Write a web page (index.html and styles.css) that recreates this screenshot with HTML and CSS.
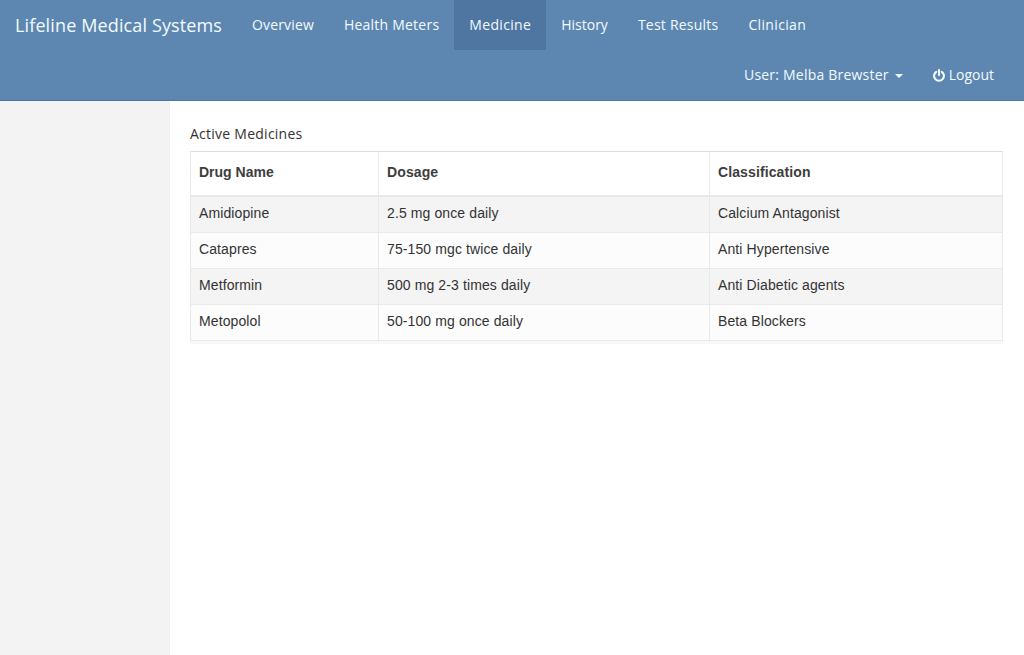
FILE: index.html
```html
<!DOCTYPE html>
<html lang="en">
<head>
<meta charset="utf-8">
<title>Lifeline Medical Systems</title>
<link rel="stylesheet" href="styles.css">
</head>
<body>
<header class="navbar">
  <div class="nav-row">
    <a class="brand">Lifeline Medical Systems</a>
    <nav class="nav">
      <a class="nav-link snug">Overview</a>
      <a class="nav-link">Health Meters</a>
      <a class="nav-link wide active">Medicine</a>
      <a class="nav-link tight">History</a>
      <a class="nav-link">Test Results</a>
      <a class="nav-link wide">Clinician</a>
    </nav>
  </div>
  <div class="nav-row user-row">
    <a class="nav-link user">User: Melba Brewster <span class="caret"></span></a>
    <a class="nav-link tight"><svg class="power" viewBox="0 0 12 13"><path d="M3.2 2.8A4.9 4.9 0 1 0 8.8 2.8M6 1.1v5" fill="none" stroke="#f2fbff" stroke-width="2.1" stroke-linecap="round"/></svg>Logout</a>
  </div>
</header>
<div class="page">
  <aside class="sidebar"></aside>
  <main class="content">
    <h1 class="title">Active Medicines</h1>
    <table class="medicines">
      <thead><tr><th class="col-name">Drug Name</th><th class="col-dosage">Dosage</th><th>Classification</th></tr></thead>
      <tbody>
        <tr><td>Amidiopine</td><td>2.5 mg once daily</td><td>Calcium Antagonist</td></tr>
        <tr><td>Catapres</td><td>75-150 mgc twice daily</td><td>Anti Hypertensive</td></tr>
        <tr><td>Metformin</td><td>500 mg 2-3 times daily</td><td>Anti Diabetic agents</td></tr>
        <tr><td>Metopolol</td><td>50-100 mg once daily</td><td>Beta Blockers</td></tr>
      </tbody>
    </table>
  </main>
</div>
</body>
</html>
```
FILE: styles.css
```css
* { box-sizing: border-box; }
body {
  margin: 0;
  height: 655px;
  display: flex;
  flex-direction: column;
  background: #fff;
  color: #333;
  font: 14px/20px "Open Sans", sans-serif;
}
.navbar { height: 101px; background: #5d87b0; border-bottom: 1px solid #4f76a0; color: #f2fbff; }
.nav-row { display: flex; height: 50px; }
.nav { display: flex; }
.brand { padding: 15px; font-size: 18px; letter-spacing: 0.13px; white-space: nowrap; }
.nav-link { padding: 15px; letter-spacing: 0.23px; white-space: nowrap; display: flex; align-items: center; }
.snug { letter-spacing: 0.14px; }
.wide { letter-spacing: 0.33px; }
.tight { letter-spacing: 0; }
.user { letter-spacing: 0.21px; }
.active { background: #4f76a0; }
.user-row { justify-content: flex-end; padding-right: 15px; }
.caret { margin: 2px 0 0 6px; border-top: 4px solid #f2fbff; border-left: 4px solid transparent; border-right: 4px solid transparent; }
.power { width: 12px; height: 13px; margin-right: 4px; }
.page { flex: 1; display: flex; }
.sidebar { width: 170px; background: #f3f3f3; border-right: 1px solid #eee; }
.content { flex: 1; padding: 23px 21px 0 20px; }
.title { margin: 0 0 7px; font-size: 14px; line-height: 20px; font-weight: 400; letter-spacing: 0.25px; }
.medicines {
  width: 813px;
  table-layout: fixed;
  border-collapse: separate;
  border-spacing: 0;
  border: 1px solid #e9e9e9;
  border-top-color: #ddd;
  font-family: "Liberation Sans", Arial, sans-serif;
  letter-spacing: 0.11px;
  box-shadow: 0 3px 0 #f8f8f8;
}
.medicines th { height: 45px; padding: 0 8px 3px; text-align: left; color: #3d3d3d; border-bottom: 2px solid #e9e9e9; }
.medicines td { height: 36px; padding: 0 8px 3px; border-bottom: 1px solid #e9e9e9; }
.medicines th + th, .medicines td + td { border-left: 1px solid #e9e9e9; }
.medicines tbody tr:nth-child(odd) { background: #f4f4f4; }
.medicines tbody tr:nth-child(even) { background: #fcfcfc; }
.medicines tr:last-child td { height: 35px; border-bottom: 0; }
.medicines thead tr:last-child th { border-bottom: 2px solid #e9e9e9; }
.col-name { width: 187px; letter-spacing: 0; }
.col-dosage { width: 331px; }
```
